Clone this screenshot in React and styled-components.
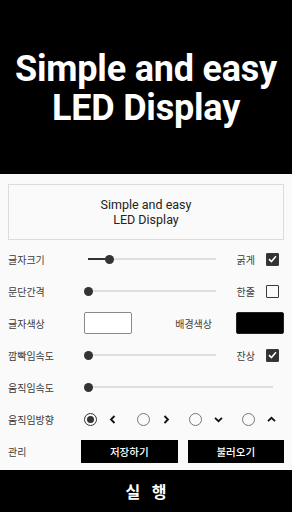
import styled, { createGlobalStyle } from "styled-components"

const GlobalStyle = createGlobalStyle`
    html, body {
        margin: 0;
        padding: 0;
        background: #fafafa;
    }
    body {
        width: 292px;
        height: 512px;
        overflow: hidden;
        font-family: Roboto, "Noto Sans CJK KR", sans-serif;
    }
`

const Screen = styled.div`
    display: flex;
    flex-direction: column;
    width: 292px;
    height: 512px;
`

const Hero = styled.header`
    height: 174px;
    background: #000;
    display: flex;
    align-items: center;
    justify-content: center;

    h1 {
        margin: 0;
        padding-top: 3px;
        color: #fff;
        font-family: Roboto, sans-serif;
        font-weight: 700;
        font-size: 36px;
        line-height: 39px;
        text-align: center;
        letter-spacing: -0.2px;
    }
`

const Panel = styled.main`
    flex: 1;
    background: #fafafa;
    padding: 10px 8px 0;
    display: flex;
    flex-direction: column;
`

const Preview = styled.div`
    height: 56px;
    box-sizing: border-box;
    border: 1px solid #dcdcdc;
    display: flex;
    align-items: center;
    justify-content: center;
    text-align: center;
    font-family: Roboto, sans-serif;
    font-size: 12.5px;
    line-height: 15px;
    color: #222;
    margin-bottom: 3px;
`

const Row = styled.div`
    height: 32px;
    display: flex;
    align-items: center;
`

const Label = styled.span`
    flex: 0 0 ${({$w}) => $w || 76}px;
    font-family: "Noto Sans CJK KR", sans-serif;
    font-size: 10px;
    color: #3c3c3c;
`

const SideLabel = styled.span`
    margin-left: auto;
    font-family: "Noto Sans CJK KR", sans-serif;
    font-size: 10px;
    color: #3c3c3c;
`

const SliderBox = styled.div`
    position: relative;
    flex: 0 0 ${({$w}) => $w}px;
    height: 16px;

    &::before {
        content: "";
        position: absolute;
        left: 4px;
        right: 4px;
        top: 7px;
        height: 2px;
        background: #dedede;
    }
`

const SliderFill = styled.div`
    position: absolute;
    left: 4px;
    top: 7px;
    height: 2px;
    background: #333;
`

const Thumb = styled.div`
    position: absolute;
    top: 4px;
    width: 9px;
    height: 9px;
    margin-left: -4.5px;
    border-radius: 50%;
    background: #333;
`

const Check = styled.div`
    width: 13px;
    height: 13px;
    box-sizing: border-box;
    margin: 0 5px 0 11px;
    border-radius: 1px;
    border: 1.5px solid #3a3a3a;
    background: ${({$on}) => ($on ? "#333" : "transparent")};
    display: flex;
    align-items: center;
    justify-content: center;
`

const Swatch = styled.div`
    width: 48px;
    height: 22px;
    box-sizing: border-box;
    border: 1px solid ${({$color}) => ($color === "#fff" ? "#8a8a8a" : "#222")};
    border-radius: 2px;
    background: ${({$color}) => $color};
    margin-left: ${({$ml}) => $ml || 0}px;
`

const Directions = styled.div`
    flex: 1;
    display: flex;
    justify-content: space-between;
    padding-right: 8px;
`

const DirItem = styled.div`
    display: flex;
    align-items: center;
    gap: 12px;
`

const Radio = styled.div`
    width: 13px;
    height: 13px;
    box-sizing: border-box;
    border-radius: 50%;
    border: 1.2px solid ${({$on}) => ($on ? "#333" : "#777")};
    display: flex;
    align-items: center;
    justify-content: center;

    &::after {
        content: "";
        display: ${({$on}) => ($on ? "block" : "none")};
        width: 7px;
        height: 7px;
        border-radius: 50%;
        background: #333;
    }
`

const Buttons = styled.div`
    flex: 1;
    display: grid;
    grid-template-columns: 1fr 1fr;
    gap: 10px;
`

const DarkButton = styled.button`
    height: 23px;
    border: none;
    border-radius: 0;
    background: #000;
    color: #fff;
    font-family: "Noto Sans CJK KR", sans-serif;
    font-weight: 500;
    font-size: 10.5px;
    padding: 0;
`

const RunBar = styled.footer`
    height: 42px;
    background: #000;
    color: #fff;
    display: flex;
    align-items: center;
    justify-content: center;
    font-family: "Noto Sans CJK KR", sans-serif;
    font-weight: 700;
    font-size: 16px;
    letter-spacing: 4px;
    padding-left: 4px;
`

const Slider = ({ width, value }) => {
    const track = width - 8
    return (
        <SliderBox $w={width}>
            <SliderFill style={{ width: track * value }} />
            <Thumb style={{ left: 4 + track * value }} />
        </SliderBox>
    )
}

const Tick = () => (
    <svg width="9" height="8" viewBox="0 0 9 8">
        <path d="M1 4.2 L3.4 6.5 L8 1.3" fill="none" stroke="#fff" strokeWidth="1.6" />
    </svg>
)

const Chevron = ({ dir }) => {
    const paths = {
        left: "M5.5 1 L2 4.5 L5.5 8",
        right: "M2.5 1 L6 4.5 L2.5 8",
        down: "M1 2.8 L4.5 6.2 L8 2.8",
        up: "M1 6.2 L4.5 2.8 L8 6.2",
    }
    return (
        <svg width="9" height="9" viewBox="0 0 9 9">
            <path d={paths[dir]} fill="none" stroke="#111" strokeWidth="1.8" />
        </svg>
    )
}

export default function App() {
    return (
        <>
            <GlobalStyle />
            <Screen>
                <Hero>
                    <h1>Simple and easy<br />LED Display</h1>
                </Hero>

                <Panel>
                    <Preview>Simple and easy<br />LED Display</Preview>

                    <Row>
                        <Label>글자크기</Label>
                        <Slider width={136} value={0.165} />
                        <SideLabel>굵게</SideLabel>
                        <Check $on><Tick /></Check>
                    </Row>

                    <Row>
                        <Label>문단간격</Label>
                        <Slider width={136} value={0} />
                        <SideLabel>한줄</SideLabel>
                        <Check />
                    </Row>

                    <Row>
                        <Label>글자색상</Label>
                        <Swatch $color="#fff" />
                        <SideLabel>배경색상</SideLabel>
                        <Swatch $color="#000" $ml={24} />
                    </Row>

                    <Row>
                        <Label>깜빡임속도</Label>
                        <Slider width={136} value={0} />
                        <SideLabel>잔상</SideLabel>
                        <Check $on><Tick /></Check>
                    </Row>

                    <Row>
                        <Label>움직임속도</Label>
                        <Slider width={193} value={0} />
                    </Row>

                    <Row>
                        <Label>움직임방향</Label>
                        <Directions>
                            <DirItem><Radio $on /><Chevron dir="left" /></DirItem>
                            <DirItem><Radio /><Chevron dir="right" /></DirItem>
                            <DirItem><Radio /><Chevron dir="down" /></DirItem>
                            <DirItem><Radio /><Chevron dir="up" /></DirItem>
                        </Directions>
                    </Row>

                    <Row>
                        <Label $w={73}>관리</Label>
                        <Buttons>
                            <DarkButton>저장하기</DarkButton>
                            <DarkButton>불러오기</DarkButton>
                        </Buttons>
                    </Row>
                </Panel>

                <RunBar>실 행</RunBar>
            </Screen>
        </>
    )
}
